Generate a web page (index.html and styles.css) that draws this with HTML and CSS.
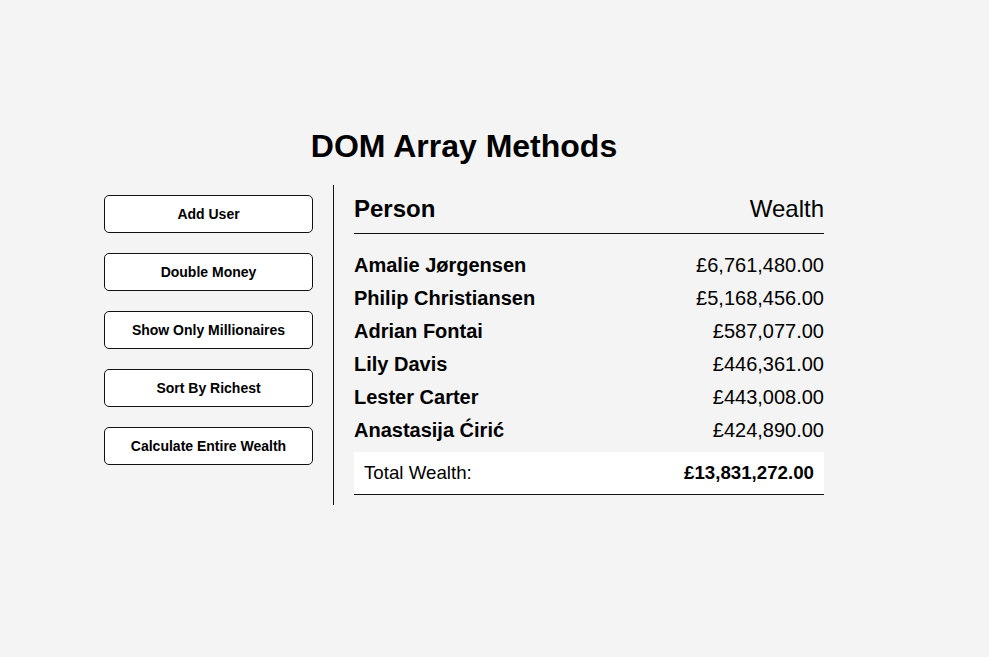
FILE: index.html
```html
<!DOCTYPE html>
<html lang="en">
<head>
<meta charset="UTF-8">
<title>DOM Array Methods</title>
<link rel="stylesheet" href="styles.css">
</head>
<body>
  <h1 class="title">DOM Array Methods</h1>
  <div class="container">
    <aside class="sidebar">
      <button class="btn">Add User</button>
      <button class="btn">Double Money</button>
      <button class="btn">Show Only Millionaires</button>
      <button class="btn">Sort By Richest</button>
      <button class="btn">Calculate Entire Wealth</button>
    </aside>
    <main class="main">
      <h2 class="head"><strong class="bold">Person</strong> Wealth</h2>
      <div class="person"><strong class="bold">Amalie Jørgensen</strong> £6,761,480.00</div>
      <div class="person"><strong class="bold">Philip Christiansen</strong> £5,168,456.00</div>
      <div class="person"><strong class="bold">Adrian Fontai</strong> £587,077.00</div>
      <div class="person"><strong class="bold">Lily Davis</strong> £446,361.00</div>
      <div class="person"><strong class="bold">Lester Carter</strong> £443,008.00</div>
      <div class="person"><strong class="bold">Anastasija Ćirić</strong> £424,890.00</div>
      <h3 class="total">Total Wealth: <strong class="bold">£13,831,272.00</strong></h3>
    </main>
  </div>
</body>
</html>
```
FILE: styles.css
```css
* {
  box-sizing: border-box;
}

body {
  background: #f4f4f4;
  font-family: "Liberation Sans", Arial, Helvetica, sans-serif;
  color: #000;
  margin: 0;
  min-height: 100vh;
  padding: 128px 61px 0 0;
  display: flex;
  flex-direction: column;
  align-items: center;
}

.title {
  font-size: 32px;
  font-weight: bold;
  margin: 0 0 20px;
}

.container {
  display: flex;
  width: 760px;
}

.sidebar {
  width: 250px;
  padding: 10px 20px;
  border-right: 1px solid #111;
}

.btn {
  display: block;
  width: 100%;
  background-color: #fff;
  border: 1px solid #111;
  border-radius: 5px;
  padding: 10px;
  margin-bottom: 20px;
  font-family: "Liberation Sans", Arial, sans-serif;
  font-size: 14px;
  line-height: 16px;
  font-weight: bold;
  color: #000;
  cursor: pointer;
}

.main {
  flex: 1;
  padding: 10px 20px;
}

.bold {
  font-weight: 700;
}

.head {
  display: flex;
  justify-content: space-between;
  font-size: 24px;
  font-weight: 400;
  border-bottom: 1px solid #111;
  padding-bottom: 10px;
  margin: 0 0 20px;
}

.person {
  display: flex;
  justify-content: space-between;
  font-size: 20px;
  margin-bottom: 10px;
}

.total {
  display: flex;
  justify-content: space-between;
  background-color: #fff;
  border-bottom: 1px solid #111;
  padding: 10px;
  font-size: 18.72px;
  font-weight: 400;
  margin: 0;
}
```
